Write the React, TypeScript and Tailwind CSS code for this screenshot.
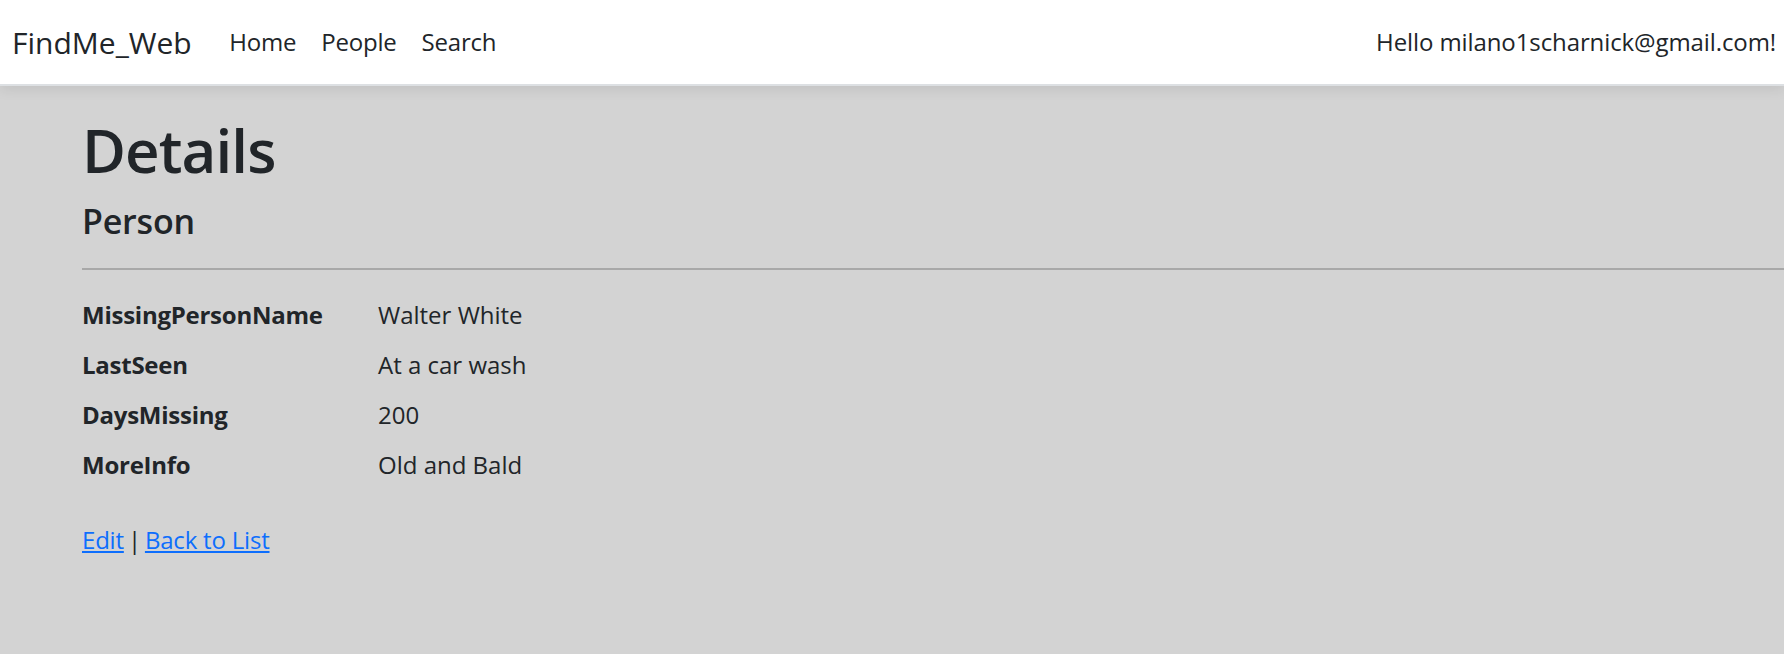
const navLinks = ["Home", "People", "Search"];

const details: [string, string][] = [
  ["MissingPersonName", "Walter White"],
  ["LastSeen", "At a car wash"],
  ["DaysMissing", "200"],
  ["MoreInfo", "Old and Bald"],
];

export default function App() {
  return (
    <div className="min-h-[654px] bg-[#d3d3d3] font-['Open_Sans',sans-serif] text-[#212529]">
      <header className="relative z-10 flex h-[86px] items-center border-b-2 border-[#dde0e3] bg-white pl-[12px] pr-[8px] shadow-[0_4px_12px_rgba(0,0,0,0.08)]">
        <a href="#" className="text-[30px] text-[#212529]">
          FindMe_Web
        </a>
        <nav className="ml-[25px] flex">
          {navLinks.map((label) => (
            <a key={label} href="#" className="px-[12.5px] text-[24px] tracking-[-0.2px] text-[#212529]">
              {label}
            </a>
          ))}
        </nav>
        <p className="ml-auto text-[24px] tracking-[-0.1px]">Hello milano1scharnick@gmail.com!</p>
      </header>

      <main className="pl-[82px] pt-[28px]">
        <h1 className="text-[60px] font-semibold leading-[1.2] tracking-[-0.9px]">Details</h1>
        <div>
          <h4 className="mt-[15px] text-[34px] font-semibold leading-[1.2] tracking-[-0.2px]">Person</h4>
          <hr className="mt-[26px] border-t-2 border-[#a8a8a8]" />
          <dl className="mt-[27px] grid grid-cols-[296px_1fr] text-[24px] leading-[36px]">
            {details.map(([label, value]) => (
              <div key={label} className="contents">
                <dt className="mb-[14px] font-bold tracking-[-0.25px]">{label}</dt>
                <dd className="mb-[14px]">{value}</dd>
              </div>
            ))}
          </dl>
        </div>
        <div className="mt-[25px] text-[24px] leading-[36px] tracking-[-0.2px]">
          <a href="#" className="text-[#0d6efd] underline">Edit</a>
          <span className="[word-spacing:-2px]"> | </span>
          <a href="#" className="text-[#0d6efd] underline">Back to List</a>
        </div>
      </main>
    </div>
  );
}
